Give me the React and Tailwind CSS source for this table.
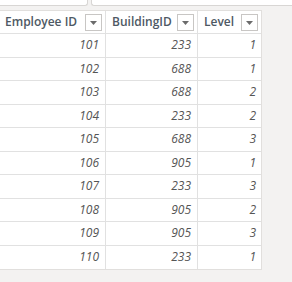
import React from "react";

const rows = [
  [101, 233, 1],
  [102, 688, 1],
  [103, 688, 2],
  [104, 233, 2],
  [105, 688, 3],
  [106, 905, 1],
  [107, 233, 3],
  [108, 905, 2],
  [109, 905, 3],
  [110, 233, 1],
];

function FilterBox() {
  return (
    <div className="w-[17px] h-[17px] shrink-0 border border-[#c8c6c4] bg-white flex items-center justify-center">
      <svg width="7" height="4" viewBox="0 0 7 4">
        <path d="M0 0 L7 0 L3.5 4 Z" fill="#6b6b6b" />
      </svg>
    </div>
  );
}

function HeaderCell({ label, width, pl, last }) {
  return (
    <div
      className={`flex items-center justify-between h-[22px] ${pl} pr-[3px] ${
        last ? "" : "border-r border-[#e1e1e1]"
      } ${width}`}
    >
      <span className="text-[12px] font-semibold text-[#4e5964] leading-none">{label}</span>
      <div className="mt-[1px]">
        <FilterBox />
      </div>
    </div>
  );
}

export default function App() {
  return (
    <div className="w-[292px] h-[282px] bg-[#f3f2f1] overflow-hidden font-['Open_Sans',sans-serif]">
      <div className="flex h-[10px] gap-[3px]">
        <div className="w-[88px] h-[6px] bg-white border-r border-b border-[#d8d6d4] rounded-br-[3px]" />
        <div className="flex-1 h-[6px] bg-white border-l border-b border-[#d8d6d4] rounded-bl-[3px]" />
      </div>
      <div className="w-[262px] bg-white border-t border-r border-b border-[#e1dfdd]">
        <div className="flex border-b border-[#e1e1e1]">
          <HeaderCell label="Employee ID" width="w-[106px]" pl="pl-[5px]" />
          <HeaderCell label="BuildingID" width="w-[92px]" pl="pl-[6px]" />
          <HeaderCell label="Level" width="w-[63px]" pl="pl-[6px]" last />
        </div>
        {rows.map((r, i) => (
          <div
            key={r[0]}
            className={`flex h-[23.5px] ${i < rows.length - 1 ? "border-b border-[#e1e1e1]" : ""}`}
          >
            <div className="w-[106px] border-r border-[#e1e1e1] flex items-center justify-end pr-[6px] text-[12px] italic text-[#555555]">
              {r[0]}
            </div>
            <div className="w-[92px] border-r border-[#e1e1e1] flex items-center justify-end pr-[6px] text-[12px] italic text-[#555555]">
              {r[1]}
            </div>
            <div className="w-[63px] flex items-center justify-end pr-[5px] text-[12px] italic text-[#555555]">
              {r[2]}
            </div>
          </div>
        ))}
      </div>
    </div>
  );
}
